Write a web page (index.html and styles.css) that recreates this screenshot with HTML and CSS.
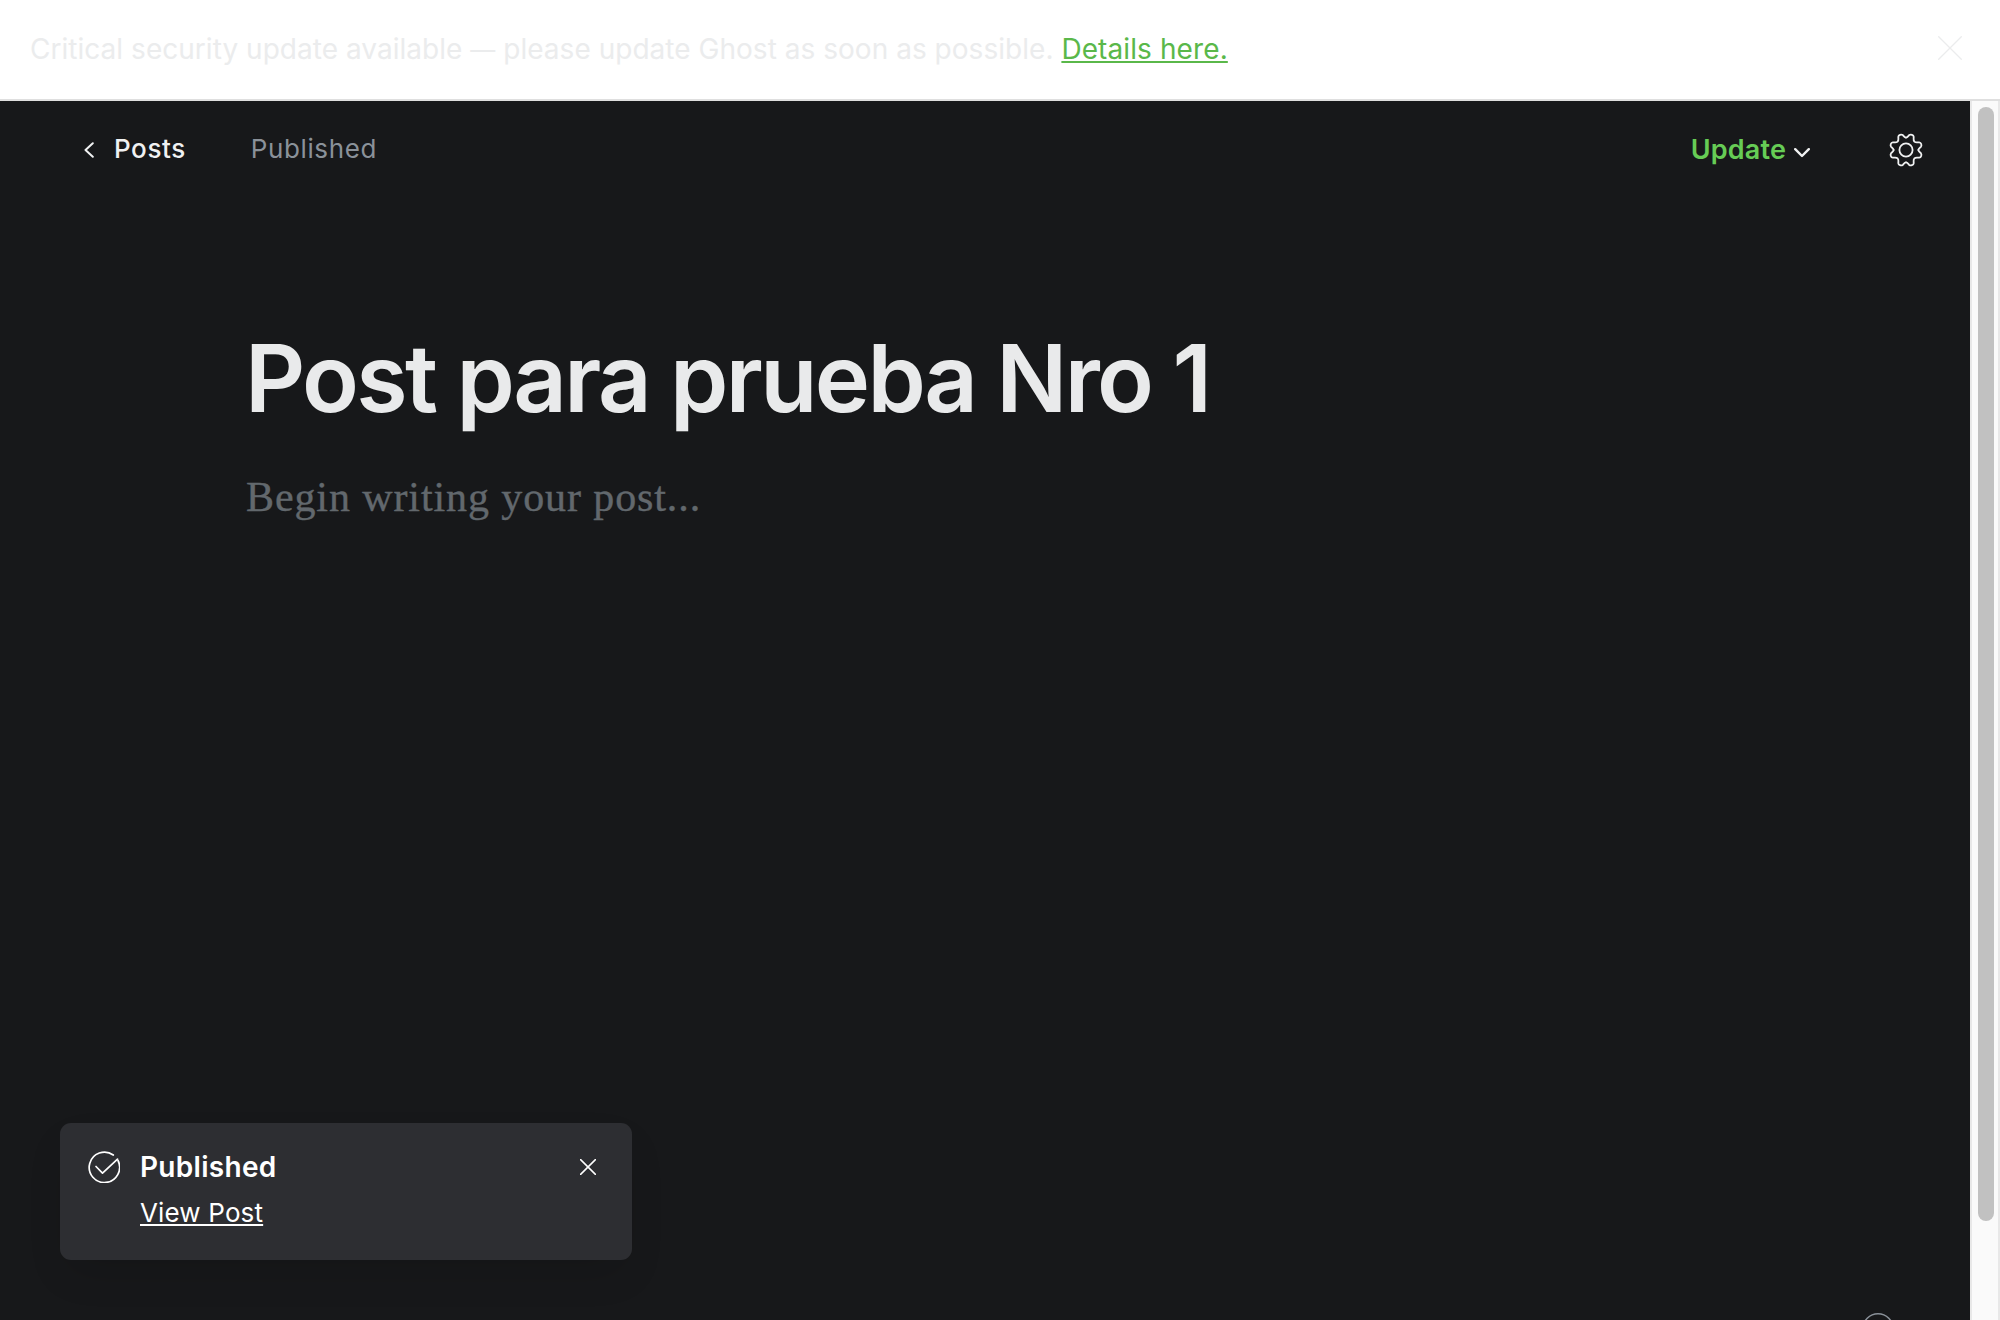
FILE: index.html
```html
<!DOCTYPE html>
<html lang="en">
<head>
<meta charset="utf-8">
<title>Ghost editor</title>
<link rel="stylesheet" href="styles.css">
</head>
<body>
<div class="banner">
  <p class="banner-text">Critical security update available <span class="dash">—</span> please update Ghost as soon as possible. <a class="banner-link" href="#">Details here.</a></p>
  <svg class="banner-close" viewBox="0 0 24 24"><path d="M.7.7l22.6 22.6M23.3.7L.7 23.3"/></svg>
</div>
<div class="viewport">
  <main class="editor">
    <header class="toolbar">
      <a class="back" href="#"><svg class="icon-back" viewBox="0 0 10 16"><path d="M8.800 1.300L1.500 8l7.300 6.700"/></svg><span class="back-label">Posts</span></a>
      <span class="status">Published</span>
      <button class="update"><span class="update-label">Update</span><svg class="icon-down" viewBox="0 0 16 10"><path d="M1.200 1.200L8 8l6.800-6.800"/></svg></button>
      <svg class="icon-gear" viewBox="0 0 34 34"><g transform="translate(17 17)"><circle r="6.600"/><path id="tooth" d="M0-12.400C1.500-12.400 2.300-14 3.200-14.900C4.800-16 7.600-15.200 7.700-13.200C7.800-11.500 7-9.800 8.400-8.400C9.800-7 11.500-7.800 13.200-7.700C15.200-7.600 16-4.800 14.900-3.200C14-2.300 12.400-1.500 12.400 0"/><use href="#tooth" transform="rotate(90)"/><use href="#tooth" transform="rotate(180)"/><use href="#tooth" transform="rotate(270)"/></g></svg>
    </header>
    <article class="post">
      <h1 class="title">Post para prueba Nro 1</h1>
      <p class="body-placeholder">Begin writing your post...</p>
    </article>
    <aside class="toast">
      <svg class="icon-check" viewBox="0 0 32 32"><path d="M25.300 4A15.200 15.200 0 1 0 30 9.500"/><path d="M8 15.500l6.500 6.700L29.500 8.200"/></svg>
      <div class="toast-content"><strong class="toast-title">Published</strong><a class="toast-link" href="#">View Post</a></div>
      <svg class="toast-close" viewBox="0 0 16 16"><path d="M.6.6l14.800 14.800M15.400.6L.6 15.400"/></svg>
    </aside>
    <svg class="help" viewBox="0 0 32 32"><circle cx="16" cy="16" r="15.200"/></svg>
  </main>
  <div class="scrollbar"><div class="thumb"></div></div>
</div>
</body>
</html>
```
FILE: styles.css
```css
* { box-sizing: border-box; }
body { margin: 0; height: 1320px; display: flex; flex-direction: column; overflow: hidden; font-family: Inter, "Liberation Sans", sans-serif; background: #fff; }
p, h1 { margin: 0; }
svg { fill: none; stroke: currentColor; stroke-linecap: round; stroke-linejoin: round; flex: none; display: block; }

.banner { height: 101px; flex: none; display: flex; align-items: center; justify-content: space-between; padding: 0 38px 0 30px; border-bottom: 2px solid #dfdfdf; color: #ebeced; }
.banner-text { font-size: 28px; line-height: 40px; letter-spacing: 0.030px; padding-bottom: 1px; }
.dash { font-size: 25px; line-height: 1; }
.banner-link { color: #5ab84a; letter-spacing: 0.100px; text-decoration: underline; text-decoration-thickness: 2px; text-underline-offset: 2px; }
.banner-close { width: 24px; height: 24px; stroke-width: 1.300; margin-bottom: 3px; }

.viewport { flex: 1; min-height: 0; display: flex; }
.editor { flex: 1; background: #17181a; position: relative; overflow: hidden; }
.toolbar { height: 98px; display: flex; align-items: center; padding: 0 47px 0 84px; color: #f0f1f2; font-size: 26px; letter-spacing: 0.600px; }
.back { display: flex; align-items: center; gap: 20px; color: inherit; text-decoration: none; font-weight: 500; }
.back-label, .status { padding-bottom: 3px; }
.icon-back { width: 10px; height: 16px; stroke-width: 2; }
.status { margin-left: 65px; color: #8a9199; }
.update { margin-left: auto; display: flex; align-items: center; gap: 8px; padding: 0; border: 0; background: none; color: #f0f1f2; font: 600 27px Inter, sans-serif; letter-spacing: 0.150px; }
.update-label { color: #66cc55; padding-bottom: 2px; }
.icon-down { width: 16px; height: 10px; margin-top: 5px; stroke-width: 2.400; }
.icon-gear { width: 34px; height: 34px; margin-left: 79px; stroke-width: 1.800; }

.post { padding: 119px 246px 0 245px; }
.title { font-size: 93.500px; line-height: 120px; font-weight: 600; color: #e9eaeb; letter-spacing: -2.600px; white-space: nowrap; }
.body-placeholder { margin: 29px 0 0 1px; font: 42px/60px "Liberation Serif", serif; color: #62686d; letter-spacing: 0.900px; -webkit-text-stroke: 0.400px #62686d; }

.toast { position: absolute; left: 60px; top: 1022px; width: 572px; height: 137px; border-radius: 11px; background: #2d2e32; color: #fff; display: flex; align-items: flex-start; padding: 28px 36px 0 28px; box-shadow: 0 18px 40px -8px rgba(0,0,0,.14); }
.icon-check { width: 32px; height: 32px; stroke-width: 1.700; }
.toast-content { margin: -1px 0 0 20px; flex: 1; display: flex; flex-direction: column; align-items: flex-start; }
.toast-title { font-size: 28px; line-height: 34px; font-weight: 600; letter-spacing: 0.300px; }
.toast-link { margin-top: 13px; font-size: 26px; line-height: 32px; letter-spacing: 0.150px; color: #fff; text-decoration-thickness: 2px; text-underline-offset: 2px; }
.toast-close { width: 16px; height: 16px; margin-top: 8px; stroke-width: 1.500; }
.help { position: absolute; left: 1862px; top: 1212px; width: 32px; height: 32px; color: #8a9199; stroke-width: 1.600; }

.scrollbar { width: 30px; flex: none; background: #fafafa; border: solid #e8e8e8; border-width: 0 2px; padding: 6px 4px 0 6px; }
.thumb { width: 16px; height: 1114px; border-radius: 8px; background: #c1c1c1; }
```
